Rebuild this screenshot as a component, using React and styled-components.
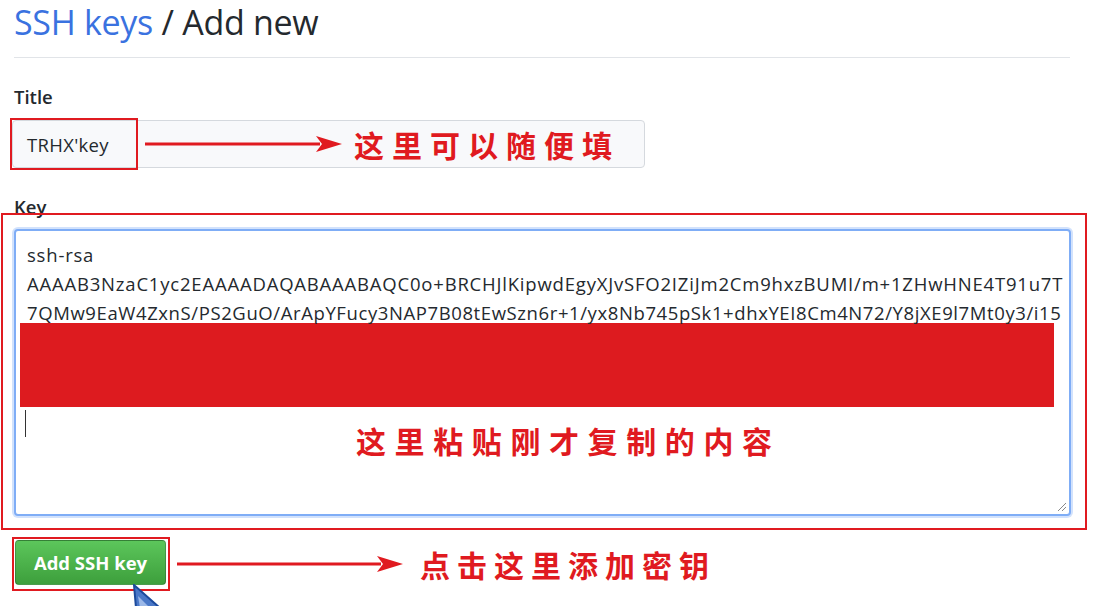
import React from 'react';
import styled, { createGlobalStyle } from 'styled-components';

const GlobalStyle = createGlobalStyle`
    html, body {
        margin: 0;
        padding: 0;
        background: #fff;
        overflow: hidden;
    }
    body {
        font-family: "Open Sans", "Noto Sans", Arial, sans-serif;
        color: #24292e;
    }
`;

const red = '#e01a20';

const keyLines = [
    { text: 'ssh-rsa', spacing: 0.8 },
    { text: 'AAAAB3NzaC1yc2EAAAADAQABAAABAQC0o+BRCHJlKipwdEgyXJvSFO2IZiJm2Cm9hxzBUMI/m+1ZHwHNE4T91u7T', spacing: 0.8 },
    { text: '7QMw9EaW4ZxnS/PS2GuO/ArApYFucy3NAP7B08tEwSzn6r+1/yx8Nb745pSk1+dhxYEI8Cm4N72/Y8jXE9l7Mt0y3/i15', spacing: 0.6 },
];

const Arrow = ({ width }) => (
    <ArrowSvg width={width} height="22" viewBox={`0 0 ${width} 22`}>
        <rect x="0" y="9.5" width={width - 22} height="3" fill={red} />
        <polygon points={`${width - 26},3 ${width},11 ${width - 26},19 ${width - 20},11`} fill={red} />
    </ArrowSvg>
);

export default function App() {
    return (
        <Page>
            <GlobalStyle />
            <Subhead>
                <Heading>
                    <Crumb>SSH keys</Crumb> / Add new
                </Heading>
            </Subhead>

            <Label>Title</Label>
            <InputWrap>
                <Input>TRHX'key</Input>
                <Annotation>
                    <InputMark />
                    <Arrow width={197} />
                    <Note spacing={8}>这里可以随便填</Note>
                </Annotation>
            </InputWrap>

            <Label gap={29}>Key</Label>
            <Frame>
                <TextArea>
                    {keyLines.map((line) => (
                        <Line key={line.text} spacing={line.spacing}>{line.text}</Line>
                    ))}
                    <Redacted />
                    <CaretRow>
                        <Caret />
                        <Note offset={330} top={15} spacing={8.6}>这里粘贴刚才复制的内容</Note>
                    </CaretRow>
                    <Grip viewBox="0 0 10 10">
                        <line x1="1" y1="9" x2="9" y2="1" stroke="#888" strokeWidth="1" />
                        <line x1="5" y1="9" x2="9" y2="5" stroke="#888" strokeWidth="1" />
                    </Grip>
                </TextArea>
            </Frame>

            <ButtonRow>
                <ButtonMark>
                    <Button>Add SSH key</Button>
                </ButtonMark>
                <Arrow width={226} />
                <Note offset={17}>点击这里添加密钥</Note>
            </ButtonRow>

            <Pointer width="34" height="24" viewBox="0 0 34 24">
                <polygon points="2,1 4,24 28,24" fill="#4a78c8" stroke="#1c4a9c" strokeWidth="2" />
                <polygon points="6,12 8,24 18,24" fill="#9bb8e8" />
            </Pointer>
        </Page>
    );
}

const Page = styled.div`
    position: relative;
    width: 1090px;
    height: 606px;
    padding-left: 14px;
    display: flex;
    flex-direction: column;
    align-items: flex-start;
`;
const Subhead = styled.div`
    width: 1056px;
    height: 58px;
    box-sizing: border-box;
    border-bottom: 1px solid #e1e4e8;
`;
const Heading = styled.h1`
    margin: 0;
    font-size: 34px;
    line-height: 44px;
    font-weight: 400;
    color: #24292e;
    letter-spacing: -0.3px;
`;
const Crumb = styled.span`
    color: #3a72e0;
`;
const Label = styled.div`
    margin-top: ${(p) => p.gap || 29}px;
    font-size: 18.5px;
    line-height: 20px;
    font-weight: 600;
    color: #24292e;
`;
const InputWrap = styled.div`
    position: relative;
    margin-top: 13px;
    margin-left: -2px;
`;
const Input = styled.div`
    width: 633px;
    height: 48px;
    box-sizing: border-box;
    padding-left: 14px;
    display: flex;
    align-items: center;
    background: #f8f9fb;
    border: 1px solid #d5d9de;
    border-radius: 4px;
    font-size: 18.5px;
    letter-spacing: 0.3px;
    color: #24292e;
`;
const Annotation = styled.div`
    position: absolute;
    top: -2px;
    left: -2px;
    display: flex;
    align-items: center;
`;
const InputMark = styled.div`
    width: 128px;
    height: 52px;
    box-sizing: border-box;
    border: 2px solid ${red};
`;
const ArrowSvg = styled.svg`
    display: block;
    margin-left: 7px;
`;
const Note = styled.div`
    margin-left: ${(p) => (p.offset === undefined ? 12 : p.offset)}px;
    margin-top: ${(p) => p.top || 0}px;
    font-family: "Noto Sans CJK SC", "Noto Sans CJK TC", serif;
    font-size: 30px;
    line-height: 36px;
    font-weight: 700;
    letter-spacing: ${(p) => p.spacing || 7}px;
    color: ${red};
    white-space: nowrap;
`;
const Frame = styled.div`
    margin-top: -4px;
    margin-left: -13px;
    width: 1086px;
    height: 317px;
    box-sizing: border-box;
    border: 2px solid ${red};
    padding: 14px 14px 12px 11px;
`;
const TextArea = styled.div`
    position: relative;
    height: 100%;
    box-sizing: border-box;
    padding: 9px 12px 0 11px;
    border: 2px solid #7fadf6;
    border-radius: 4px;
    box-shadow: 0 0 0 2px rgba(127, 173, 246, 0.35);
    background: #fff;
    overflow: hidden;
`;
const Line = styled.div`
    font-size: 18.5px;
    line-height: 29px;
    color: #24292e;
    white-space: nowrap;
    letter-spacing: ${(p) => p.spacing}px;
`;
const Redacted = styled.div`
    margin-top: -4px;
    margin-left: -7px;
    width: 1034px;
    height: 84px;
    background: #dd1b1f;
`;
const CaretRow = styled.div`
    display: flex;
    align-items: flex-start;
`;
const Caret = styled.div`
    width: 1px;
    height: 27px;
    margin-top: 3px;
    margin-left: -2px;
    background: #333;
`;
const Grip = styled.svg`
    position: absolute;
    right: 2px;
    bottom: 2px;
    width: 10px;
    height: 10px;
`;
const ButtonRow = styled.div`
    margin-top: 7px;
    margin-left: -2px;
    display: flex;
    align-items: center;
`;
const ButtonMark = styled.div`
    padding: 1px 2px 4px 1px;
    border: 2px solid ${red};
`;
const Button = styled.button`
    width: 151px;
    height: 45px;
    border: 1px solid rgba(27, 31, 35, 0.25);
    border-radius: 4px;
    background: linear-gradient(#5cc65b, #3d9f3c);
    color: #fff;
    font-family: "Open Sans", Arial, sans-serif;
    font-size: 18.5px;
    font-weight: 700;
    padding: 0;
    cursor: pointer;
`;
const Pointer = styled.svg`
    position: absolute;
    left: 132px;
    top: 584px;
`;
